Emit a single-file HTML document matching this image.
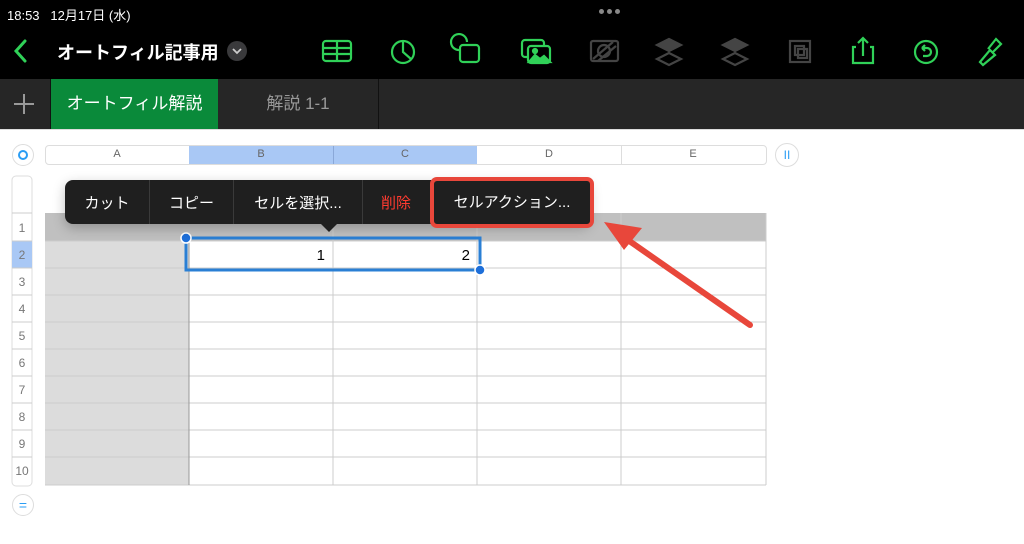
<!DOCTYPE html><html><head><meta charset="utf-8"><style>
body{margin:0;width:1024px;height:544px;overflow:hidden;background:#fff;font-family:"Liberation Sans","Noto Sans CJK JP",sans-serif;position:relative}
.a{position:absolute}
.t{color:#fff}
</style></head><body>
<div class="a" style="left:0;top:0;width:1024px;height:79px;background:#000"></div>
<div class="a t" style="left:7px;top:5px;font-size:13px">18:53&nbsp;&nbsp;&nbsp;12月17日 (水)</div>
<div class="a" style="left:599px;top:9px;width:5px;height:5px;border-radius:50%;background:#888;box-shadow:8px 0 #888,16px 0 #888"></div>
<svg class="a" style="left:10px;top:38px" width="20" height="26"><path d="M15 3 L6 13 L15 23" stroke="#30d158" stroke-width="3" fill="none" stroke-linecap="round"/></svg>
<div class="a t" style="left:57px;top:39px;font-size:18px;font-weight:bold">オートフィル記事用</div>
<div class="a" style="left:227px;top:41px;width:20px;height:20px;border-radius:50%;background:#3a3a3c"></div>
<svg class="a" style="left:227px;top:41px" width="20" height="20"><path d="M6 8l4 4 4-4" stroke="#ccc" stroke-width="1.8" fill="none"/></svg>
<svg class="a" style="left:0;top:0" width="1024" height="79" fill="none" stroke="#30d158" stroke-width="2.2">
<rect x="323" y="41" width="28" height="20" rx="3"/><path d="M323 48h28M323 54h28M337 41v20"/>
<circle cx="403" cy="52" r="11"/><path d="M403 41v11l8 7"/>
<rect x="460" y="45" width="19" height="17" rx="3"/><path d="M460 50a8 8 0 1 1 7-8"/>
<rect x="522" y="40" width="22" height="17" rx="3"/><rect x="528" y="46" width="22" height="17" rx="3" fill="#000"/><path d="M529 62l6-7 5 4 4-3 6 6z" fill="#30d158"/><circle cx="535" cy="51" r="2" fill="#30d158"/>
<g stroke="#444"><rect x="591" y="41" width="27" height="20" rx="2"/><circle cx="604" cy="51" r="6"/><path d="M593 59l20-17M598 61l18-15"/>
<path d="M735 39l12 6-12 6-12-6z" fill="#444"/><path d="M735 53l12 6-12 6-12-6z"/>
<path d="M669 39l12 6-12 6-12-6z" fill="#444"/><path d="M669 53l12 6-12 6-12-6z"/>
<rect x="790" y="41" width="20" height="21"/><rect x="795" y="46" width="9" height="9"/><rect x="798" y="49" width="9" height="9"/></g>
<path d="M856 47h-3v16h20v-16h-3M863 56v-18M858 43l5-5 5 5"/>
<circle cx="926" cy="52" r="11"/><path d="M922 48h5a4 4 0 0 1 0 8h-4M922 48l3-3M922 48l3 3"/>
<path d="M980 62l10-12 5 5-12 10zM988 49l8-10 5 5-8 8"/>
</svg>
<div class="a" style="left:0;top:79px;width:1024px;height:50px;background:#262626"></div>
<div class="a" style="left:50px;top:79px;width:1px;height:50px;background:#111"></div>
<div class="a" style="left:378px;top:79px;width:1px;height:50px;background:#111"></div>
<svg class="a" style="left:14px;top:94px" width="20" height="20"><path d="M10 0v20M0 10h20" stroke="#999" stroke-width="2"/></svg>
<div class="a t" style="left:51px;top:79px;width:167px;height:50px;background:#0a8a3a;font-size:17px;line-height:50px;text-align:center">オートフィル解説</div>
<div class="a" style="left:218px;top:79px;width:160px;height:50px;color:#999;font-size:17px;line-height:50px;text-align:center">解説 1-1</div>
<div class="a" style="left:0;top:129px;width:1024px;height:1px;background:#ddd"></div>
<div class="a" style="left:12px;top:144px;width:20px;height:20px;border-radius:50%;border:1px solid #ddd"></div>
<div class="a" style="left:18px;top:150px;width:6px;height:6px;border-radius:50%;border:2px solid #2a9df4"></div>
<div class="a" style="left:45px;top:145px;width:720px;height:18px;border:1px solid #ddd;border-radius:4px"></div>
<div class="a" style="left:189px;top:146px;width:288px;height:18px;background:#a9c8f5"></div>
<div class="a" style="left:333px;top:146px;width:1px;height:18px;background:#8aa8d8"></div>
<div class="a" style="left:621px;top:146px;width:1px;height:18px;background:#ddd"></div>
<div class="a" style="left:45px;top:148px;font-size:11px;color:#666;width:144px;text-align:center">A</div>
<div class="a" style="left:189px;top:148px;font-size:11px;color:#666;width:144px;text-align:center">B</div>
<div class="a" style="left:333px;top:148px;font-size:11px;color:#666;width:144px;text-align:center">C</div>
<div class="a" style="left:477px;top:148px;font-size:11px;color:#666;width:144px;text-align:center">D</div>
<div class="a" style="left:621px;top:148px;font-size:11px;color:#666;width:144px;text-align:center">E</div>
<div class="a" style="left:775px;top:143px;width:22px;height:22px;border-radius:50%;border:1px solid #ddd;color:#2a9df4;font-size:12px;text-align:center;line-height:22px">II</div>
<svg class="a" style="left:0;top:170px" width="780" height="320">
<rect x="12" y="6" width="20" height="310" rx="4" fill="#fff" stroke="#ddd"/>
<rect x="12" y="71" width="20" height="27" fill="#a9c8f5"/>
<rect x="45" y="43" width="721" height="28" fill="#c0c0c0"/>
<rect x="45" y="71" width="144" height="244" fill="#dcdcdc"/>
<g stroke="#ccc"><path d="M45 71h721M45 98h721M45 125h721M45 152h721M45 179h721M45 206h721M45 233h721M45 260h721M45 287h721M45 315h721M333 43v272M477 43v272M621 43v272M766 43v272M12 43h20M12 71h20M12 98h20M12 125h20M12 152h20M12 179h20M12 206h20M12 233h20M12 260h20M12 287h20"/></g>
<path d="M189 71v244" stroke="#999"/>
<g font-size="12" fill="#777" text-anchor="middle" font-family="Liberation Sans"><text x="22" y="62">1</text><text x="22" y="89">2</text><text x="22" y="116">3</text><text x="22" y="143">4</text><text x="22" y="170">5</text><text x="22" y="197">6</text><text x="22" y="224">7</text><text x="22" y="251">8</text><text x="22" y="278">9</text><text x="22" y="305">10</text></g>
<text x="325" y="90" font-size="15" text-anchor="end" font-family="Liberation Sans">1</text>
<text x="470" y="90" font-size="15" text-anchor="end" font-family="Liberation Sans">2</text>
<rect x="186" y="68" width="294" height="32" fill="none" stroke="#2a7fd4" stroke-width="3"/>
<circle cx="186" cy="68" r="5" fill="#1e6fd9" stroke="#fff" stroke-width="1.5"/><circle cx="480" cy="100" r="5" fill="#1e6fd9" stroke="#fff" stroke-width="1.5"/>
</svg>
<div class="a" style="left:12px;top:494px;width:20px;height:20px;border-radius:50%;border:1px solid #ddd;color:#2a9df4;text-align:center;line-height:20px;font-size:14px">=</div>
<div class="a" style="left:65px;top:180px;width:525px;height:44px;background:#1f1f1f;border-radius:8px;box-shadow:0 4px 12px rgba(0,0,0,.25)"></div>
<div class="a" style="left:321px;top:224px;border-left:8px solid transparent;border-right:8px solid transparent;border-top:8px solid #1f1f1f"></div>
<div class="a" style="left:149px;top:180px;width:1px;height:44px;background:#3a3a3a;box-shadow:84px 0 #3a3a3a,213px 0 #3a3a3a"></div>
<div class="a t" style="left:65px;top:192px;width:84px;text-align:center;font-size:15px">カット</div>
<div class="a t" style="left:150px;top:192px;width:83px;text-align:center;font-size:15px">コピー</div>
<div class="a t" style="left:234px;top:192px;width:128px;text-align:center;font-size:15px">セルを選択...</div>
<div class="a" style="left:363px;top:192px;width:66px;text-align:center;font-size:15px;color:#ff3b30">削除</div>
<div class="a" style="left:430px;top:177px;width:156px;height:43px;border:4px solid #e8473b;border-radius:7px;background:#1f1f1f"></div>
<div class="a t" style="left:434px;top:191px;width:156px;text-align:center;font-size:15px">セルアクション...</div>
<svg class="a" style="left:0;top:0" width="1024" height="544"><path d="M750 325L625 238" stroke="#e8473b" stroke-width="6" stroke-linecap="round"/><path d="M604 222l38 6-18 22z" fill="#e8473b"/></svg>
</body></html>
